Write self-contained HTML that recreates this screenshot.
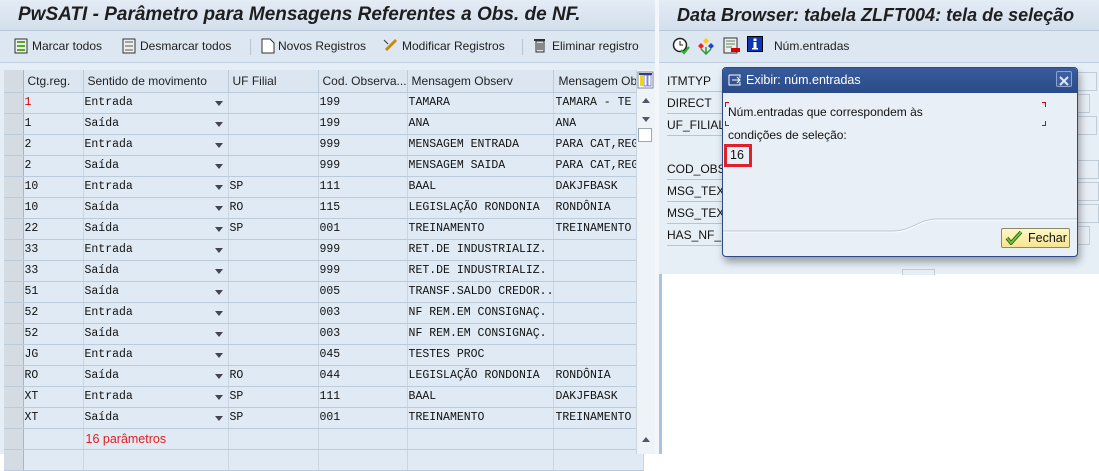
<!DOCTYPE html>
<html><head><meta charset="utf-8">
<style>
*{margin:0;padding:0;box-sizing:border-box}
body{width:1099px;height:454px;overflow:hidden;background:#fff;font-family:"Liberation Sans",sans-serif;position:relative}
.abs{position:absolute}
.title{background:linear-gradient(#e4ecf5,#d3dfec);border-bottom:1px solid #b8c8da;font-weight:bold;font-style:italic;font-size:19px;color:#1e1e1e;padding-left:18px;line-height:30px;white-space:nowrap;overflow:hidden}
.tb{background:#dde7f1;border-bottom:1px solid #c0cfdf;font-size:12px;color:#1e1e1e}
.tb span{position:absolute;top:8px;white-space:nowrap}
table{border-collapse:collapse;table-layout:fixed;position:absolute;left:4px;top:70px;font-size:12px}
td{height:21px;border-right:1px solid #c9d5e1;border-bottom:1px solid #bccbd9;background:#e0eaf4;font-family:"Liberation Mono",monospace;font-size:11.5px;padding-left:1px;white-space:nowrap;overflow:hidden;color:#111;position:relative}
th{height:22px;background:#dbe6f1;border-right:1px solid #bccbd9;border-bottom:1px solid #bccbd9;font-weight:normal;text-align:left;padding-left:4px;font-size:12px;color:#222;white-space:nowrap;overflow:hidden}
td.sel,th.sel{background:#d4dbe3;border-right:1px solid #aab6c3}
.dd::after{content:"";position:absolute;right:5px;top:8px;border-left:4px solid transparent;border-right:4px solid transparent;border-top:5px solid #445}
.lbl{position:absolute;left:667px;font-size:12px;color:#111;width:60px;border-bottom:1px solid #b8c4d0;height:22px;line-height:22px}
.inp{position:absolute;background:#e8eef5;border:1px solid #c0ccd8}
</style></head><body>
<div class="abs" style="left:0;top:0;width:656px;height:454px;background:#e5edf6"></div>
<div class="abs title" style="left:0;top:0;width:656px;height:31px">PwSATI - Parâmetro para Mensagens Referentes a Obs. de NF.</div>
<div class="abs tb" style="left:0;top:31px;width:656px;height:32px">
<svg class="abs" style="left:14px;top:7px" width="16" height="16"><rect x="1" y="1" width="12" height="14" fill="#eee" stroke="#333"/><rect x="3" y="3" width="8" height="2" fill="#5a2"/><rect x="3" y="7" width="8" height="2" fill="#5a2"/><rect x="3" y="11" width="8" height="2" fill="#5a2"/></svg>
<span style="left:32px">Marcar todos</span>
<svg class="abs" style="left:122px;top:7px" width="16" height="16"><rect x="1" y="1" width="12" height="14" fill="#eee" stroke="#333"/><line x1="3" y1="4" x2="11" y2="4" stroke="#555"/><line x1="3" y1="8" x2="11" y2="8" stroke="#555"/><line x1="3" y1="12" x2="11" y2="12" stroke="#555"/></svg>
<span style="left:140px">Desmarcar todos</span>
<div class="abs" style="left:250px;top:8px;width:1px;height:16px;background:#b5c3d2"></div>
<svg class="abs" style="left:261px;top:7px" width="14" height="16"><path d="M1 1h8l4 4v10H1z" fill="#fff" stroke="#333"/></svg>
<span style="left:278px">Novos Registros</span>
<svg class="abs" style="left:383px;top:6px" width="16" height="16"><path d="M3 13L13 3" stroke="#c80" stroke-width="3"/><path d="M1 3l4 4" stroke="#333"/></svg>
<span style="left:402px">Modificar Registros</span>
<div class="abs" style="left:522px;top:8px;width:1px;height:16px;background:#b5c3d2"></div>
<svg class="abs" style="left:533px;top:6px" width="14" height="16"><rect x="1" y="2" width="11" height="2" fill="#333"/><path d="M3 4h8v11H3z" fill="#ddd" stroke="#333"/><path d="M5 6v7M7 6v7M9 6v7" stroke="#333"/></svg>
<span style="left:552px">Eliminar registro</span>
</div>
<table>
<colgroup><col style="width:19px"><col style="width:60px"><col style="width:145px"><col style="width:90px"><col style="width:87px"><col style="width:145px"><col style="width:86px"></colgroup>
<tr><th class="sel"></th><th>Ctg.reg.</th><th>Sentido de movimento</th><th>UF Filial</th><th>Cod. Observa...</th><th>Mensagem Observ</th><th>Mensagem Obs</th></tr>
<tr><td class="sel"></td><td style="color:#d00">1</td><td class="dd">Entrada</td><td></td><td>199</td><td>TAMARA</td><td>TAMARA  - TE</td></tr>
<tr><td class="sel"></td><td>1</td><td class="dd">Saída</td><td></td><td>199</td><td>ANA</td><td>ANA</td></tr>
<tr><td class="sel"></td><td>2</td><td class="dd">Entrada</td><td></td><td>999</td><td>MENSAGEM ENTRADA</td><td>PARA CAT,REG</td></tr>
<tr><td class="sel"></td><td>2</td><td class="dd">Saída</td><td></td><td>999</td><td>MENSAGEM SAIDA</td><td>PARA CAT,REG</td></tr>
<tr><td class="sel"></td><td>10</td><td class="dd">Entrada</td><td>SP</td><td>111</td><td>BAAL</td><td>DAKJFBASK</td></tr>
<tr><td class="sel"></td><td>10</td><td class="dd">Saída</td><td>RO</td><td>115</td><td>LEGISLAÇÃO RONDONIA</td><td>RONDÔNIA</td></tr>
<tr><td class="sel"></td><td>22</td><td class="dd">Saída</td><td>SP</td><td>001</td><td>TREINAMENTO</td><td>TREINAMENTO</td></tr>
<tr><td class="sel"></td><td>33</td><td class="dd">Entrada</td><td></td><td>999</td><td>RET.DE INDUSTRIALIZ.</td><td></td></tr>
<tr><td class="sel"></td><td>33</td><td class="dd">Saída</td><td></td><td>999</td><td>RET.DE INDUSTRIALIZ.</td><td></td></tr>
<tr><td class="sel"></td><td>51</td><td class="dd">Saída</td><td></td><td>005</td><td>TRANSF.SALDO CREDOR..</td><td></td></tr>
<tr><td class="sel"></td><td>52</td><td class="dd">Entrada</td><td></td><td>003</td><td>NF REM.EM CONSIGNAÇ.</td><td></td></tr>
<tr><td class="sel"></td><td>52</td><td class="dd">Saída</td><td></td><td>003</td><td>NF REM.EM CONSIGNAÇ.</td><td></td></tr>
<tr><td class="sel"></td><td>JG</td><td class="dd">Entrada</td><td></td><td>045</td><td>TESTES PROC</td><td></td></tr>
<tr><td class="sel"></td><td>RO</td><td class="dd">Saída</td><td>RO</td><td>044</td><td>LEGISLAÇÃO RONDONIA</td><td>RONDÔNIA</td></tr>
<tr><td class="sel"></td><td>XT</td><td class="dd">Entrada</td><td>SP</td><td>111</td><td>BAAL</td><td>DAKJFBASK</td></tr>
<tr><td class="sel"></td><td>XT</td><td class="dd">Saída</td><td>SP</td><td>001</td><td>TREINAMENTO</td><td>TREINAMENTO</td></tr>
<tr><td class="sel"></td><td></td><td style="font-family:'Liberation Sans',sans-serif;color:#e02020;font-size:12.5px;padding-left:2px">16 parâmetros</td><td></td><td></td><td></td><td></td></tr>
<tr><td class="sel"></td><td></td><td></td><td></td><td></td><td></td><td></td></tr>
</table>
<div class="abs" style="left:636px;top:70px;width:19px;height:384px;background:#eef3f8;border-left:1px solid #c9d5e1"></div>
<svg class="abs" style="left:637px;top:71px" width="17" height="18"><rect x="1" y="1" width="15" height="16" fill="#fff" stroke="#7a8a9a"/><rect x="3" y="4" width="3" height="11" fill="#f3d21c"/><rect x="7" y="4" width="3" height="11" fill="#fff" stroke="#33a" stroke-width=".6"/><rect x="11" y="4" width="3" height="11" fill="#fff" stroke="#33a" stroke-width=".6"/><rect x="2" y="2" width="13" height="2" fill="#2a3e8a"/></svg>
<div class="abs" style="left:642px;top:98px;border-left:4px solid transparent;border-right:4px solid transparent;border-bottom:5px solid #556"></div>
<div class="abs" style="left:642px;top:117px;border-left:4px solid transparent;border-right:4px solid transparent;border-top:5px solid #556"></div>
<div class="abs" style="left:638px;top:128px;width:14px;height:14px;background:#fff;border:1px solid #9aa8b8"></div>
<div class="abs" style="left:642px;top:437px;border-left:4px solid transparent;border-right:4px solid transparent;border-bottom:5px solid #556"></div>
<div class="abs" style="left:655px;top:0;width:4px;height:454px;background:#f4f6f9"></div>

<div class="abs" style="left:659px;top:0;width:440px;height:274px;background:#e6eef6"></div>
<div class="abs" style="left:659px;top:274px;width:3px;height:180px;background:#a9c3e0"></div>
<div class="abs title" style="left:659px;top:0;width:440px;height:31px;padding-left:18px;font-size:18px">Data Browser: tabela ZLFT004: tela de seleção</div>
<div class="abs tb" style="left:659px;top:31px;width:440px;height:32px">
<svg class="abs" style="left:13px;top:6px" width="18" height="18"><circle cx="8" cy="8" r="6.5" fill="#fff" stroke="#222" stroke-width="1.5"/><path d="M8 4v4h3" stroke="#222" fill="none"/><path d="M9 13l3 3 5-6" stroke="#3a3" stroke-width="2.2" fill="none"/></svg>
<svg class="abs" style="left:38px;top:6px" width="18" height="18"><path d="M9 1l3 3-3 3-3-3z" fill="#fc0"/><path d="M4 6l3 3-3 3-3-3z" fill="#e22"/><path d="M14 6l3 3-3 3-3-3z" fill="#24c"/><path d="M9 10v7M4 12l5 5 5-5" stroke="#393" fill="none" stroke-width="1.5"/></svg>
<svg class="abs" style="left:64px;top:6px" width="18" height="18"><rect x="1" y="1" width="13" height="15" fill="#eee" stroke="#333"/><path d="M3 4h9M3 7h9M3 10h6" stroke="#585"/><rect x="8" y="11" width="9" height="4" fill="#d00"/></svg>
<svg class="abs" style="left:88px;top:5px" width="17" height="17"><rect x=".5" y=".5" width="15" height="15" fill="#0b36b8" stroke="#000"/><rect x="6.5" y="2.5" width="3" height="2.5" fill="#fff"/><rect x="6.5" y="6" width="3" height="7" fill="#fff"/><rect x="5" y="12" width="6" height="1.5" fill="#fff"/></svg>
<span style="left:115px">Núm.entradas</span>
</div>
<div class="lbl" style="top:70px">ITMTYP</div>
<div class="lbl" style="top:92px">DIRECT</div>
<div class="lbl" style="top:114px">UF_FILIAL</div>
<div class="lbl" style="top:158px">COD_OBS</div>
<div class="lbl" style="top:180px">MSG_TEXT</div>
<div class="lbl" style="top:202px">MSG_TEXT</div>
<div class="lbl" style="top:224px">HAS_NF_F</div>
<div class="inp" style="left:1076px;top:72px;width:21px;height:19px"></div>
<div class="inp" style="left:1076px;top:94px;width:14px;height:19px"></div>
<div class="inp" style="left:1076px;top:116px;width:21px;height:19px"></div>
<div class="inp" style="left:1076px;top:160px;width:23px;height:19px"></div>
<div class="inp" style="left:1076px;top:182px;width:23px;height:19px"></div>
<div class="inp" style="left:1076px;top:204px;width:23px;height:19px"></div>
<div class="inp" style="left:1076px;top:226px;width:14px;height:19px"></div>
<div class="inp" style="left:902px;top:269px;width:33px;height:6px;background:#e6eef6;border-bottom:none"></div>

<div class="abs" style="left:722px;top:67px;width:356px;height:190px;background:#e9eff6;border:1px solid #2b4a86;border-radius:4px;box-shadow:2px 5px 8px rgba(0,0,0,.35);overflow:hidden">
 <div style="height:25px;background:linear-gradient(#3a5c9c,#2a4a88);color:#fff;font-size:12.5px;line-height:24px;padding-left:23px;position:relative">Exibir: núm.entradas
  <svg style="position:absolute;left:5px;top:6px" width="14" height="12"><path d="M1 1h11v3M1 1v10h11v-3" stroke="#fff" fill="none"/><path d="M4 6h8M9 3l3 3-3 3" stroke="#fff" fill="none"/></svg>
  <div style="position:absolute;right:5px;top:3px;width:16px;height:16px;border:1px solid #8aa4d0;background:#3d5f9f;border-radius:2px"><svg width="14" height="14"><path d="M3 3l8 8M11 3l-8 8" stroke="#dfe8f8" stroke-width="2"/></svg></div>
 </div>
 <div style="position:absolute;left:2px;top:34px;height:5px;width:4px;border-left:1px solid #d00;border-top:1px solid #d00"></div>
 <div style="position:absolute;left:2px;top:53px;width:4px;height:5px;border-left:1px solid #d00;border-bottom:1px solid #d00"></div>
 <div style="position:absolute;left:319px;top:34px;width:4px;height:5px;border-right:1px solid #d00;border-top:1px solid #d00"></div>
 <div style="position:absolute;left:319px;top:53px;width:4px;height:5px;border-right:1px solid #d00;border-bottom:1px solid #d00"></div>
 <div style="position:absolute;left:5px;top:37px;font-size:12px;color:#111">Núm.entradas que correspondem às</div>
 <div style="position:absolute;left:5px;top:60px;font-size:12px;color:#111">condições de seleção:</div>
 <div style="position:absolute;left:1px;top:76px;width:28px;height:23px;border:3px solid #e0202a;font-size:12.5px;line-height:17px;padding-left:3px;color:#111">16</div>
 <svg style="position:absolute;left:0;top:148px" width="356" height="20"><path d="M0 15H170C190 15 195 3 215 3H356" stroke="#b6c4d4" fill="none"/><path d="M0 16H170C190 16 195 4 215 4H356" stroke="#fff" fill="none"/></svg>
 <div style="position:absolute;left:278px;top:160px;width:69px;height:20px;background:linear-gradient(#fff7c8,#f8e590);border:1px solid #8a8a6a;border-radius:2px;font-size:12.5px;line-height:18px;padding-left:26px;color:#111">Fechar
  <svg style="position:absolute;left:3px;top:2px" width="18" height="14"><path d="M2 7l4 5L16 1" stroke="#1a5a10" stroke-width="3.5" fill="none"/><path d="M2 7l4 5L16 1" stroke="#7cc43c" stroke-width="1.8" fill="none"/></svg>
 </div>
</div>
</body></html>
